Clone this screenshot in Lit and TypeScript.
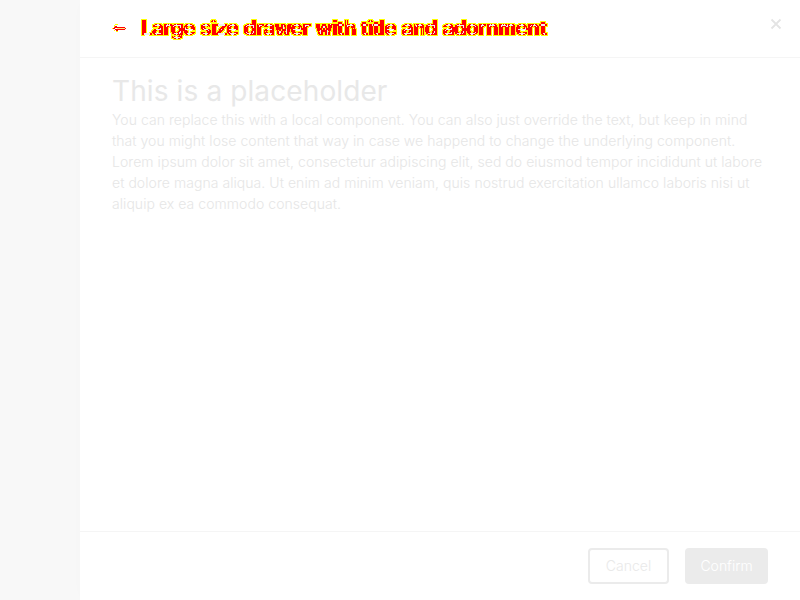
import { LitElement, html, css } from "lit";
import { customElement } from "lit/decorators.js";

@customElement("app-root")
export class AppRoot extends LitElement {
  static styles = css`
    :host {
      display: flex;
      height: 600px;
      background: #f8f8f8;
      font-family: Inter, "Liberation Sans", sans-serif;
      font-size: 14px;
      color: #e6e6e6;
      overflow: hidden;
    }
    * { box-sizing: border-box; }
    .drawer {
      width: 720px;
      margin-left: auto;
      display: flex;
      flex-direction: column;
      background: #fff;
      box-shadow: 0 0 16px rgba(0, 0, 0, 0.01);
    }
    header {
      height: 58px;
      flex: none;
      display: flex;
      align-items: center;
      padding: 0 16px 0 32px;
      border-bottom: 1px solid #f5f5f5;
    }
    .back { width: 16px; height: 12px; flex: none; }
    .defs { width: 0; height: 0; flex: none; }
    .title {
      margin: 0 0 0 12px;
      font-size: 20px;
      line-height: 27px;
      font-weight: 500;
      letter-spacing: -0.05px;
      color: #f00;
      white-space: nowrap;
      filter: url(#ghost);
    }
    .close { width: 16px; height: 16px; margin: 0 0 9px auto; }
    main { flex: 1; padding: 16px 32px; }
    h1 {
      margin: 0;
      font-weight: 400;
      font-size: 28px;
      line-height: 35px;
      letter-spacing: 0.11px;
      color: #e8e8e8;
    }
    p { margin: 0; line-height: 21px; font-weight: 300; letter-spacing: 0.054px; }
    footer {
      height: 69px;
      display: flex;
      justify-content: flex-end;
      align-items: center;
      gap: 16px;
      padding: 0 32px;
      border-top: 1px solid #f5f5f5;
    }
    button {
      height: 36px;
      padding: 0 0 2px;
      font: inherit;
      font-weight: 300;
      border: 2px solid #ebebeb;
      border-radius: 4px;
      background: #fff;
      color: #e9e9e9;
    }
    .cancel { width: 81px; }
    .confirm { width: 83px; background: #ebebeb; color: #fff; }
  `;

  render() {
    return html`
      <section class="drawer">
        <header>
          <svg class="defs">
            <filter id="ghost" x="-2%" y="-10%" width="104%" height="120%" color-interpolation-filters="sRGB">
              <feComponentTransfer in="SourceAlpha" result="core">
                <feFuncA type="discrete" tableValues="0 0 0 1 1" />
              </feComponentTransfer>
              <feOffset in="core" dx="2" result="core2" />
              <feComposite in="core" in2="core2" operator="xor" result="mask" />
              <feComposite in="core" in2="core2" operator="in" result="both" />
              <feMorphology in="mask" operator="dilate" radius="1" result="grown" />
              <feComposite in="grown" in2="both" operator="out" result="edge" />
              <feFlood flood-color="#ff0" />
              <feComposite in2="edge" operator="in" result="yellow" />
              <feFlood flood-color="#f00" />
              <feComposite in2="mask" operator="in" result="red" />
              <feFlood flood-color="#eee" />
              <feComposite in2="both" operator="in" result="gray" />
              <feMerge>
                <feMergeNode in="gray" />
                <feMergeNode in="yellow" />
                <feMergeNode in="red" />
              </feMerge>
            </filter>
          </svg>
          <svg class="back" viewBox="0 0 16 12" shape-rendering="crispEdges">
            <path d="M0 5h2v1h-2zM3 1h3v1h-3zM2 2h1v2h-1zM2 7h1v1h-1zM4 8h2v1h-2zM6 4h7v1h-7z" fill="#ff0" />
            <path d="M1 5h2v1h-2zM3 3h2v1h-2zM2 4h11v1h-11zM3 6h10v1h-10zM13 5h1v1h-1zM4 7h2v1h-2z" fill="#f00" />
            <path d="M5 5h8v1h-8z" fill="#ffe680" />
          </svg>
          <h2 class="title">Large size drawer with title and adornment</h2>
          <svg class="close" viewBox="0 0 16 16">
            <path d="M3.5 3.5l9 9M12.5 3.5l-9 9" stroke="#e4e4e4" stroke-width="1.8" fill="none" />
          </svg>
        </header>
        <main>
          <h1>This is a placeholder</h1>
          <p>You can replace this with a local component. You can also just override the text, but keep in mind that you might lose content that way in case we happend to change the underlying component. Lorem ipsum dolor sit amet, consectetur adipiscing elit, sed do eiusmod tempor incididunt ut labore et dolore magna aliqua. Ut enim ad minim veniam, quis nostrud exercitation ullamco laboris nisi ut aliquip ex ea commodo consequat.</p>
        </main>
        <footer>
          <button class="cancel">Cancel</button>
          <button class="confirm">Confirm</button>
        </footer>
      </section>
    `;
  }
}
